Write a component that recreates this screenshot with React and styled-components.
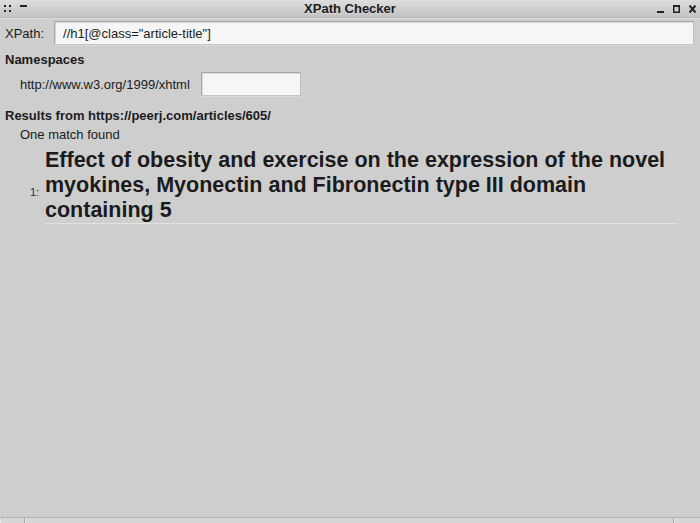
import React from 'react'
import styled, { createGlobalStyle } from 'styled-components'

const GlobalStyle = createGlobalStyle`
  html, body {
    margin: 0;
    padding: 0;
    overflow: hidden;
    background: #cecece;
  }
  body {
    font-family: "Liberation Sans", Arial, sans-serif;
    font-size: 13px;
    color: #1c1c1c;
  }
`

const Viewport = styled.div`
  width: 700px;
  height: 523px;
  overflow: hidden;
`

const Window = styled.div`
  width: 700px;
  height: 540px;
  display: flex;
  flex-direction: column;
  background: #cecece;
`

const TitleBar = styled.div`
  height: 17px;
  flex: none;
  display: flex;
  align-items: center;
  padding: 0 4px;
  background: linear-gradient(180deg, #dedede 0%, #cdcdcd 60%, #c3c3c3 100%);
  border-bottom: 1px solid #b9b9b9;
  box-shadow: 0 1px 0 #dcdcdc;
`

const Controls = styled.div`
  display: flex;
  align-items: center;
  gap: ${(p) => p.$gap}px;
  width: 40px;
  justify-content: ${(p) => (p.$right ? 'flex-end' : 'flex-start')};
`

const Title = styled.div`
  flex: 1;
  text-align: center;
  font-weight: 700;
  font-size: 13px;
  color: #1a1a1a;
  text-shadow: 0 1px 0 rgba(255, 255, 255, 0.35);
  line-height: 17px;
`

const Content = styled.div`
  flex: 1;
  padding: 3px 6px 0 5px;
  display: flex;
  flex-direction: column;
`

const Row = styled.div`
  display: flex;
  align-items: center;
  gap: ${(p) => p.$gap}px;
  padding-left: ${(p) => p.$indent || 0}px;
  margin-top: ${(p) => p.$top || 0}px;
`

const Label = styled.span`
  font-size: 13px;
  color: #1c1c1c;
  white-space: nowrap;
`

const TextField = styled.input`
  box-sizing: border-box;
  height: 24px;
  width: ${(p) => p.$width};
  flex: ${(p) => (p.$grow ? 1 : 'none')};
  background: #f6f6f6;
  border: 1px solid #a9a9a9;
  border-right-color: #bdbdbd;
  border-bottom-color: #c4c4c4;
  box-shadow: inset 1px 1px 0 #d8d8d8, 0 1px 0 #dadada;
  padding: 0 6px 0 8px;
  font-family: "Liberation Sans", Arial, sans-serif;
  font-size: 13px;
  color: #1c1c1c;
  outline: none;
`

const Heading = styled.div`
  font-weight: 700;
  font-size: 13px;
  line-height: 16px;
  margin-top: ${(p) => p.$top}px;
`

const Note = styled.div`
  padding-left: 15px;
  margin-top: 3px;
  line-height: 15px;
`

const Result = styled.div`
  display: flex;
  align-items: center;
  margin-top: 6px;
  padding-left: 25px;
`

const Index = styled.span`
  width: 15px;
  font-size: 11px;
  color: #2a3350;
  margin-top: 11px;
`

const Match = styled.h1`
  margin: 0;
  width: 633px;
  font-size: 21.5px;
  line-height: 25px;
  font-weight: 700;
  color: #1b1b1b;
  border-bottom: 1px solid #e2e2e2;
  padding-bottom: 0;
`

const StatusBar = styled.div`
  height: 22px;
  flex: none;
  display: flex;
  border-top: 1px solid #b4b4b4;
  background: #d6d6d6;
`

const StatusCell = styled.div`
  width: ${(p) => p.$width};
  flex: ${(p) => (p.$grow ? 1 : 'none')};
  border-right: 1px solid #a6a6a6;
  box-shadow: inset 1px 0 0 #e6e6e6;
  &:last-child {
    border-right: none;
  }
`

function Dots() {
  return (
    <svg width="7" height="7" viewBox="0 0 7 7">
      <rect x="0" y="0" width="2" height="2" fill="#222" />
      <rect x="5" y="0" width="2" height="2" fill="#222" />
      <rect x="0" y="5" width="2" height="2" fill="#222" />
      <rect x="5" y="5" width="2" height="2" fill="#222" />
    </svg>
  )
}

function Shade() {
  return (
    <svg width="7" height="7" viewBox="0 0 7 7">
      <rect x="0" y="0" width="7" height="2" fill="#222" />
    </svg>
  )
}

function Minimize() {
  return (
    <svg width="7" height="8" viewBox="0 0 7 8">
      <rect x="0" y="6" width="7" height="2" fill="#222" />
    </svg>
  )
}

function Maximize() {
  return (
    <svg width="7" height="8" viewBox="0 0 7 8">
      <rect x="0.75" y="0.75" width="5.5" height="6.5" fill="none" stroke="#222" strokeWidth="1.5" />
      <rect x="0" y="0" width="7" height="2" fill="#222" />
    </svg>
  )
}

function Close() {
  return (
    <svg width="7" height="8" viewBox="0 0 7 8">
      <path d="M0.5 0.5 L6.5 7.5 M6.5 0.5 L0.5 7.5" stroke="#222" strokeWidth="2" />
    </svg>
  )
}

export default function App() {
  return (
    <Viewport>
      <GlobalStyle />
      <Window>
        <TitleBar>
          <Controls $gap={9}>
            <Dots />
            <Shade />
          </Controls>
          <Title>XPath Checker</Title>
          <Controls $gap={9} $right>
            <Minimize />
            <Maximize />
            <Close />
          </Controls>
        </TitleBar>
        <Content>
          <Row $gap={10}>
            <Label>XPath:</Label>
            <TextField $grow defaultValue={'//h1[@class="article-title"]'} />
          </Row>
          <Heading $top={7}>Namespaces</Heading>
          <Row $gap={11} $indent={15} $top={4}>
            <Label>http://www.w3.org/1999/xhtml</Label>
            <TextField $width="100px" defaultValue="" />
          </Row>
          <Heading $top={12}>Results from https://peerj.com/articles/605/</Heading>
          <Note>One match found</Note>
          <Result>
            <Index>1:</Index>
            <Match>
              Effect of obesity and exercise on the expression of the novel myokines, Myonectin and
              Fibronectin type III domain containing 5
            </Match>
          </Result>
        </Content>
        <StatusBar>
          <StatusCell $width="24px" />
          <StatusCell $grow />
          <StatusCell $width="26px" />
        </StatusBar>
      </Window>
    </Viewport>
  )
}
